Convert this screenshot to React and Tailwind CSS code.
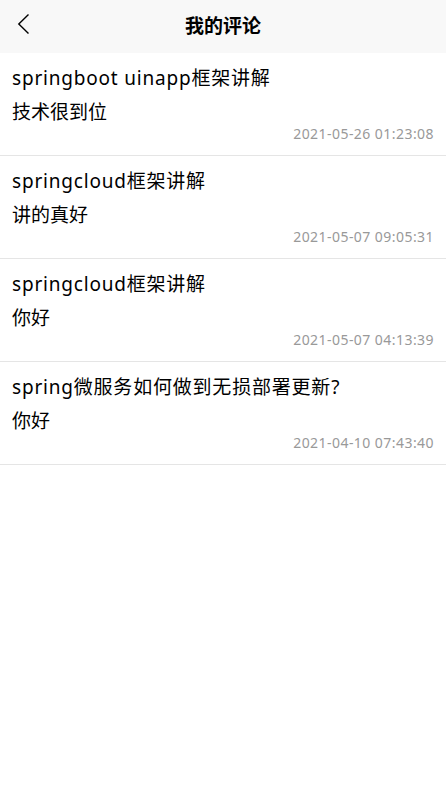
import React from 'react';

const comments = [
  { id: 1, title: 'springboot uinapp框架讲解', content: '技术很到位', time: '2021-05-26 01:23:08' },
  { id: 2, title: 'springcloud框架讲解', content: '讲的真好', time: '2021-05-07 09:05:31' },
  { id: 3, title: 'springcloud框架讲解', content: '你好', time: '2021-05-07 04:13:39' },
  { id: 4, title: 'spring微服务如何做到无损部署更新?', content: '你好', time: '2021-04-10 07:43:40' },
];

function NavBar() {
  return (
    <div className="relative flex h-[53px] items-center justify-center bg-[#f8f8f8]">
      <button type="button" className="absolute left-[12px] top-[12px] flex h-[24px] w-[24px] items-center justify-center">
        <svg width="24" height="24" viewBox="0 0 24 24" fill="none">
          <path d="M16.5 2.5 L6.8 12 L16.5 21.5" stroke="#000" strokeWidth="1.4" />
        </svg>
      </button>
      <span className="text-[19px] font-bold text-black">我的评论</span>
    </div>
  );
}

function CommentItem({ title, content, time }) {
  return (
    <div className="border-b border-[#e5e5e5] px-[12px] pt-[9px] pb-[12px]">
      <div className="text-[19px] leading-[32px] tracking-[0.8px] text-black">{title}</div>
      <div className="mt-[2px] text-[19px] leading-[32px] text-black">{content}</div>
      <div className="-mt-[3px] text-right text-[14px] leading-[18px] tracking-[0.45px] text-[#999999]">{time}</div>
    </div>
  );
}

export default function App() {
  return (
    <div
      className="min-h-[793px] w-full bg-white"
      style={{ fontFamily: '"Noto Sans", "Noto Sans CJK SC", sans-serif' }}
    >
      <NavBar />
      {comments.map((c) => (
        <CommentItem key={c.id} {...c} />
      ))}
    </div>
  );
}
